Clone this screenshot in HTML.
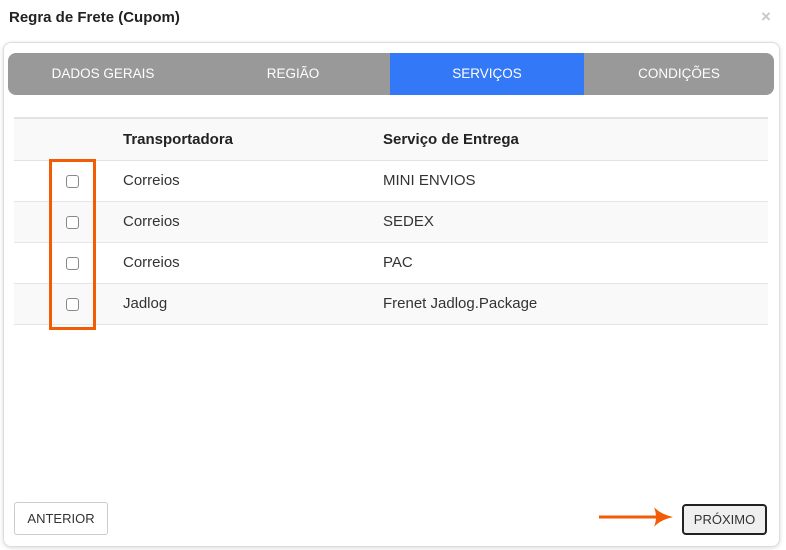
<!DOCTYPE html>
<html><head><meta charset="utf-8"><style>
*{box-sizing:border-box;margin:0;padding:0}
body{width:786px;height:550px;background:#fff;font-family:"Liberation Sans",Arial,sans-serif;position:relative;overflow:hidden;color:#333}
.title{position:absolute;left:9px;top:9px;font-size:15px;font-weight:bold;color:#222}
.close{position:absolute;left:761px;top:7px;font-size:17px;color:#c8c8c8;font-weight:bold}
.panel{position:absolute;left:3px;top:42px;width:777px;height:505px;border:1px solid #ddd;border-radius:8px;box-shadow:0 1px 4px rgba(0,0,0,.15)}
.tabs{position:absolute;left:8px;top:53px;width:766px;height:42px;background:#999;border-radius:8px;overflow:hidden}
.tab{position:absolute;top:0;height:42px;line-height:42px;color:#fff;font-size:13.5px;text-align:center}
table{position:absolute;left:14px;top:117px;width:754px;border-collapse:collapse;font-size:15px}
th{text-align:left;font-weight:bold;height:42px;border-top:2px solid #e3e3e3;border-bottom:1px solid #e3e3e3;background:#f9f9f9;color:#222}
td{height:41px;border-bottom:1px solid #e6e6e6;color:#333}
tr.g td{background:#f9f9f9}
.cb{display:inline-block;width:13px;height:13px;border:1px solid #888;border-radius:3px;margin-left:52px;vertical-align:middle;background:#fff}
.hl{position:absolute;left:49px;top:159px;width:47px;height:171px;border:3px solid #f25c05}
.btn{position:absolute;font-size:13px;text-align:center;border-radius:3px}
</style></head><body>
<div class="title">Regra de Frete (Cupom)</div>
<div class="close">×</div>
<div class="panel"></div>
<div class="tabs">
<div class="tab" style="left:0;width:190px">DADOS GERAIS</div>
<div class="tab" style="left:190px;width:190px">REGIÃO</div>
<div class="tab" style="left:382px;width:194px;background:#3378f6">SERVIÇOS</div>
<div class="tab" style="left:576px;width:190px">CONDIÇÕES</div>
</div>
<table>
<tr><th style="width:109px"></th><th style="width:260px">Transportadora</th><th>Serviço de Entrega</th></tr>
<tr><td><span class="cb"></span></td><td>Correios</td><td>MINI ENVIOS</td></tr>
<tr class="g"><td><span class="cb"></span></td><td>Correios</td><td>SEDEX</td></tr>
<tr><td><span class="cb"></span></td><td>Correios</td><td>PAC</td></tr>
<tr class="g"><td><span class="cb"></span></td><td>Jadlog</td><td>Frenet Jadlog.Package</td></tr>
</table>
<div class="hl"></div>
<div class="btn" style="left:14px;top:502px;width:94px;height:33px;line-height:31px;border:1px solid #ccc;color:#333;background:#fff">ANTERIOR</div>
<svg style="position:absolute;left:598px;top:505px" width="78" height="24"><line x1="1" y1="12" x2="62" y2="12" stroke="#f25c05" stroke-width="3"/><path d="M56 2 Q62 9 75 12 Q62 15 56 22 Q60 12 56 2 Z" fill="#f25c05"/></svg>
<div class="btn" style="left:682px;top:504px;width:85px;height:31px;line-height:27px;border:2px solid #222;background:#efefef;color:#333;border-radius:4px">PRÓXIMO</div>
</body></html>
